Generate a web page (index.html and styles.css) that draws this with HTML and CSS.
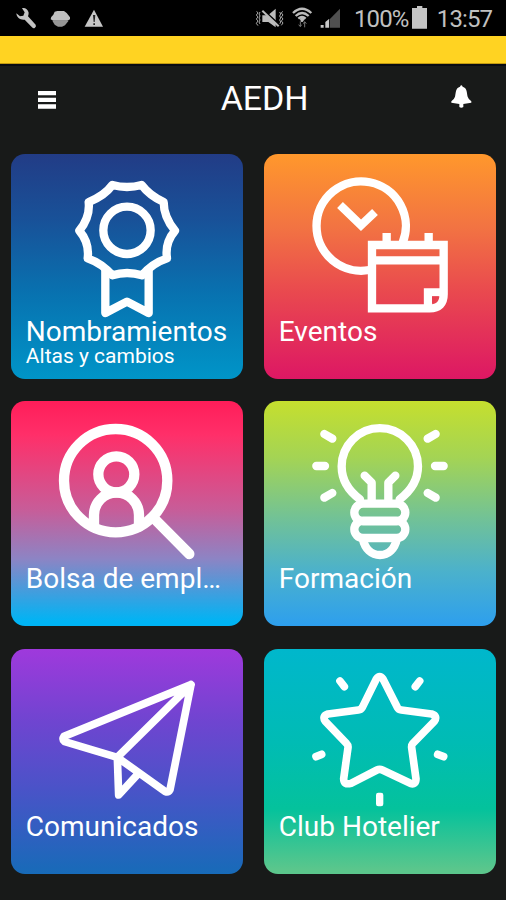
FILE: index.html
```html
<!DOCTYPE html>
<html lang="es">
<head>
<meta charset="utf-8">
<title>AEDH</title>
<link rel="stylesheet" href="styles.css">
</head>
<body>
<div class="status">
  <svg class="status-left" viewBox="0 0 330 106">
    <path d="M66 25C73 22 84 27 86 38C86 42 85 46 84 49L107 74Q110 80 104 84Q100 86 96 82L74 59C62 61 50 54 49 40L60 49L70 47L74 37Z" fill="#c4c4c4"/>
    <path d="M164 35L172 33H192L200 39L210 52V58L202 62H160L152 58Q152 50 160 44Z" fill="#c0c0c0"/>
    <path d="M157 62H206L195 76L186 80H174L164 74Z" fill="#969696"/>
    <path d="M282 29L309 80H254Z" fill="#c6c6c6"/>
    <path d="M279 45H286L284 66H281ZM280 70h5v5h-5z" fill="#222"/>
  </svg>
  <svg class="status-icons" viewBox="0 0 270 106">
    <g fill="none" stroke="#aaa" stroke-width="3"><path d="M11 34l4 5l-5 6l5 6l-5 6l5 6l-5 7l5 7M21 36l-3 6l3 6l-3 6l3 6l-3 6l3 6M89 34l-4 5l5 6l-5 6l5 6l-5 6l5 6l-5 7M80 36l3 6l-3 6l3 6l-3 6l3 6l-3 6"/></g>
    <path d="M28 46H45L68 26V82L46 66H28Z" fill="#bcbcbc"/>
    <path d="M30 29L80 76" stroke="#000" stroke-width="6"/><path d="M28 32L77 79" stroke="#bbb" stroke-width="6"/>
    <g fill="none" stroke="#bbb" stroke-width="7"><path d="M120 39Q147 14 175 39M128 48Q147 30 167 48M136 56Q147 46 158 56"/></g>
    <path d="M140 56L148 50L156 56L149 66H145Z" fill="#bbb"/><path d="M142 64v15m-5-5l5 6l4-6M155 82V66m-4 5l4-6l5 6" stroke="#777" stroke-width="3" fill="none"/>
    <path d="M203 75h9v8h-9zM217 66l11-9v26h-11z" fill="#c8c8c8"/><path d="M230 58L261 26V83H230Z" fill="#505050"/>
  </svg>
  <span class="percent">100%</span>
  <svg class="battery" viewBox="0 0 46 70"><path d="M15 0H31V6H46V68H0V6H15Z" fill="#c4c4c4"/></svg>
  <span class="clock">13:57</span>
</div>
<div class="stripe"></div>
<header class="bar">
  <svg class="menu" viewBox="0 0 54 54"><path d="M0 0H54V13H0ZM0 20H54V33H0ZM0 40H54V53H0Z" fill="#fff"/></svg>
  <h1>AEDH</h1>
  <svg class="bell" viewBox="0 0 62 72"><path d="M27 5Q31-3 35 5C49 9 47 24 50 35Q53 44 61 49V53L37 57V66Q31 70 25 66V57L1 53V49Q9 44 12 35C15 24 13 9 27 5Z" fill="#fff"/></svg>
</header>
<main class="grid">
  <a class="card awards">
    <svg class="art" viewBox="34 26 695 483"><g stroke-width="25">
      <path d="M338 119Q382 131 426 119Q450 151 492 170Q492 215 526 256Q495 292 502 339Q457 354 427 390Q382 376 338 390Q307 354 264 339Q270 292 239 256Q272 215 267 170Q315 151 338 119Z"/>
      <circle cx="382" cy="255" r="71"/><path d="M317 375V503L382 469L447 503V375"/></g></svg>
    <h2>Nombramientos</h2><p>Altas y cambios</p>
  </a>
  <a class="card events">
    <svg class="art" viewBox="34 26 695 483"><g class="square" stroke-width="25">
      <path d="M450 292A134 134 0 1 0 350 374"/><path d="M262 179L325 240L367 200"/>
      <path d="M573 299H358V489H531Q573 489 573 447ZM358 345H573M402 263V299M528 263V299M526 489V441H573"/></g><path d="M538 453h22l-22 22z" class="fold"/></svg>
    <h2>Eventos</h2>
  </a>
  <a class="card jobs">
    <svg class="art" viewBox="34 28 695 483"><g stroke-width="31">
      <circle cx="348" cy="267" r="155"/><circle cx="350" cy="248" r="54"/><path d="M283 405V370A67 67 0 0 1 418 370V405M469 386L569 487"/></g></svg>
    <h2>Bolsa de empleo</h2>
  </a>
  <a class="card training">
    <svg class="art" viewBox="34 28 695 483"><g stroke-width="25">
      <path d="M322 323C285 296 267 262 267 224A114 114 0 0 1 496 224C496 262 477 296 441 323"/>
      <path d="M336 252L357 273V333M428 252L407 273V333"/>
      <rect x="305" y="336" width="153" height="53" rx="26.500"/><rect x="305" y="387" width="153" height="52" rx="26"/><path d="M330 440C337 473 357 490 382 490S426 473 433 440"/>
      <path d="M215 127L239 141M191 223H217M215 318L239 304M549 127L525 141M573 223H547M549 318L525 304"/></g></svg>
    <h2>Formación</h2>
  </a>
  <a class="card news">
    <svg class="art" viewBox="34 25 695 483"><g stroke-width="23">
      <path d="M574 132L193 287Q187 296 195 303L353 350L497 453Q506 456 511 447ZM574 132L353 350L357 463L411 404"/></g></svg>
    <h2>Comunicados</h2>
  </a>
  <a class="card club">
    <svg class="art" viewBox="34 25 695 483"><g stroke-width="23">
      <path d="M371 115Q381 101 391 115L434 200Q438 207 446 208L537 220Q556 226 545 242L480 309Q476 314 477 321L490 414Q490 434 473 428L389 388Q381 384 373 388L295 428Q273 434 273 414L286 321Q287 314 282 309L218 242Q207 226 226 220L317 208Q325 207 329 200Z"/>
      <path d="M262 121L275 138M501 121L488 138M190 348L207 341M573 348L555 341"/></g><rect x="370" y="456" width="22" height="41" rx="7" class="dot"/></svg>
    <h2>Club Hotelier</h2>
  </a>
</main>
</body>
</html>
```

FILE: styles.css
```css
* { box-sizing: border-box; }
body {
  margin: 0;
  width: 506px;
  height: 900px;
  overflow: hidden;
  background: #181a19;
  color: #fff;
  font-family: Roboto, "Liberation Sans", sans-serif;
}
svg { display: block; flex: none; }
.status {
  display: flex;
  height: 35.5px;
  background: #000;
  color: #c0c0c0;
  font-size: 24px;
  line-height: 38px;
}
.status-left { width: 110px; height: 35.33px; }
.status-icons { width: 90px; height: 35.33px; margin-left: 143px; }
.percent { width: 53px; margin-left: 11px; letter-spacing: -.9px; }
.battery { width: 15.33px; height: 23.33px; margin: 6px 0 0 5px; }
.clock { margin-left: 9.5px; letter-spacing: -.9px; }
.stripe { height: 28.5px; background: #ffd322; border-bottom: 1px solid #c29a10; }
.bar {
  display: flex;
  align-items: center;
  justify-content: space-between;
  height: 69px;
  padding: 0 34px 0 37.67px;
  border-top: 2px solid #080b12;
}
.bar h1 {
  margin: -3px 0 0 22px;
  font-size: 34px;
  font-weight: 400;
  line-height: 40px;
  letter-spacing: -.1px;
}
.menu { width: 18px; height: 18px; margin-top: 1px; }
.bell { width: 20.67px; height: 24px; margin-top: -6px; }
.grid {
  display: grid;
  grid-template-columns: 231.67px 231.67px;
  grid-auto-rows: 225.33px;
  gap: 22.1px 21.33px;
  padding: 20.67px 0 0 11.33px;
}
.card { border-radius: 14px; overflow: hidden; min-width: 0; }
.art {
  width: 231.67px;
  height: 161px;
  overflow: visible;
  fill: none;
  stroke: #fff;
  stroke-linecap: round;
  stroke-linejoin: round;
}
.art .square { stroke-linecap: butt; stroke-linejoin: miter; }
.art .fold { fill: #e6414f; stroke: none; }
.art .dot { fill: #fff; stroke: none; }
.card h2 {
  margin: 0 14px 0 14.5px;
  font-size: 28px;
  font-weight: 400;
  line-height: 33px;
  white-space: nowrap;
  overflow: hidden;
  text-overflow: ellipsis;
}
.card p {
  margin: -4px 15px 0 14.5px;
  font-size: 21px;
  line-height: 24px;
  white-space: nowrap;
}
.awards { background: linear-gradient(#223c86, #185299 30%, #0872b0 62%, #0095c8); }
.events { background: linear-gradient(#ff982c, #f27442 32%, #e9484f 62%, #dd1764); }
.jobs { background: linear-gradient(#ff1d59, #ff2f69 15%, #c85c98 48%, #8d84c4 70%, #00b4f4 98%); }
.training { background: linear-gradient(#c5df2e, #a4d454 25%, #72c296 52%, #4bb1cc 76%, #2d9fee); }
.news { background: linear-gradient(#9f39dc, #6e45d0 33%, #4a53c8 62%, #176bb8); }
.club { background: linear-gradient(#00b7cc, #00bcb4 42%, #04c29c 71%, #5bc68c 98%); }
```
